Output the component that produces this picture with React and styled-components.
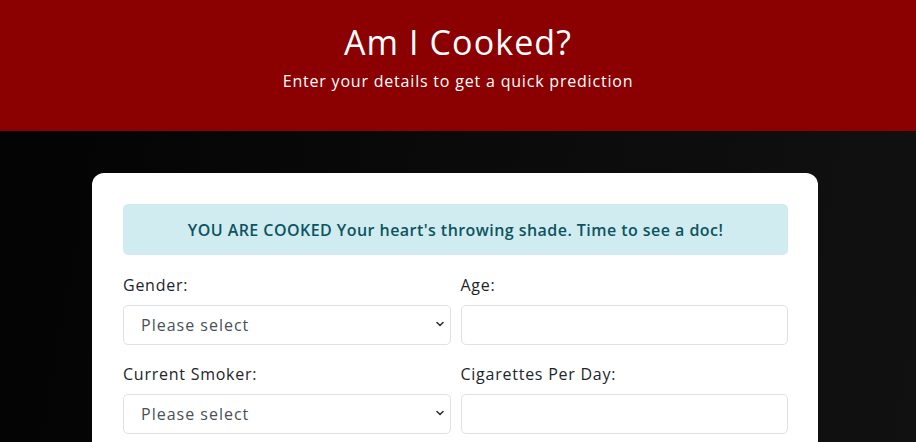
import React from "react";
import styled, { createGlobalStyle } from "styled-components";

const GlobalStyle = createGlobalStyle`
  html, body {
    margin: 0;
    padding: 0;
    height: 100%;
  }
  body {
    font-family: "Open Sans", "Noto Sans", sans-serif;
    background: linear-gradient(100deg, #030303 0%, #0a0a0a 50%, #111111 100%);
    overflow: hidden;
  }
`;

const Page = styled.div`
  min-height: 442px;
`;

const Header = styled.header`
  background: #8b0000;
  color: #fff;
  height: 131px;
  box-sizing: border-box;
  padding-top: 20px;
  text-align: center;
`;

const Title = styled.h1`
  margin: 0;
  font-size: 34px;
  line-height: 44px;
  font-weight: 400;
  letter-spacing: 1.1px;
`;

const Subtitle = styled.p`
  margin: 5px 0 0;
  font-size: 16px;
  line-height: 24px;
  font-weight: 400;
  letter-spacing: 0.8px;
`;

const Card = styled.main`
  width: 726px;
  box-sizing: border-box;
  margin: 42px auto 0;
  transform: translateX(-3px);
  background: #fff;
  border-radius: 12px;
  padding: 31px 30px 30px 31px;
`;

const Alert = styled.div`
  background: #d1ecf1;
  color: #0c5460;
  border-radius: 5px;
  height: 51px;
  display: flex;
  align-items: center;
  justify-content: center;
  font-size: 16px;
  font-weight: 600;
  letter-spacing: 0.45px;
  margin-bottom: 18px;
`;

const FormGrid = styled.div`
  display: grid;
  grid-template-columns: 1fr 1fr;
  column-gap: 10px;
  row-gap: 17px;
`;

const Field = styled.div`
  display: flex;
  flex-direction: column;
`;

const Label = styled.label`
  font-size: 16px;
  line-height: 24px;
  color: #212529;
  letter-spacing: 0.75px;
  margin-bottom: 8px;
`;

const SelectWrap = styled.div`
  position: relative;
`;

const controlStyle = `
  display: block;
  height: 40px;
  box-sizing: border-box;
  border: 1px solid #dee2e6;
  border-radius: 5px;
  background: #fff;
  font-family: "Open Sans", "Noto Sans", sans-serif;
  font-size: 16px;
  color: #495057;
  width: 100%;
  outline: none;
`;

const Select = styled.select`
  ${controlStyle}
  appearance: none;
  -webkit-appearance: none;
  padding: 0 30px 0 17px;
  letter-spacing: 1px;
`;

const Chevron = styled.svg`
  position: absolute;
  right: 7px;
  top: 16px;
  width: 8px;
  height: 6px;
  pointer-events: none;
`;

const Input = styled.input`
  ${controlStyle}
  padding: 0 12px;
`;

const fields = [
  { label: "Gender:", type: "select" },
  { label: "Age:", type: "input" },
  { label: "Current Smoker:", type: "select" },
  { label: "Cigarettes Per Day:", type: "input" },
];

export default function App() {
  return (
    <Page>
      <GlobalStyle />
      <Header>
        <Title>Am I Cooked?</Title>
        <Subtitle>Enter your details to get a quick prediction</Subtitle>
      </Header>
      <Card>
        <Alert>YOU ARE COOKED Your heart's throwing shade. Time to see a doc!</Alert>
        <FormGrid>
          {fields.map((f) => (
            <Field key={f.label}>
              <Label>{f.label}</Label>
              {f.type === "select" ? (
                <SelectWrap>
                  <Select defaultValue="">
                    <option value="">Please select</option>
                    <option value="1">Yes</option>
                    <option value="0">No</option>
                  </Select>
                  <Chevron viewBox="0 0 8 6">
                    <path d="M1 1.5 L4 4.5 L7 1.5" fill="none" stroke="#333" strokeWidth="1.6" strokeLinecap="round" strokeLinejoin="round" />
                  </Chevron>
                </SelectWrap>
              ) : (
                <Input type="number" />
              )}
            </Field>
          ))}
        </FormGrid>
      </Card>
    </Page>
  );
}
